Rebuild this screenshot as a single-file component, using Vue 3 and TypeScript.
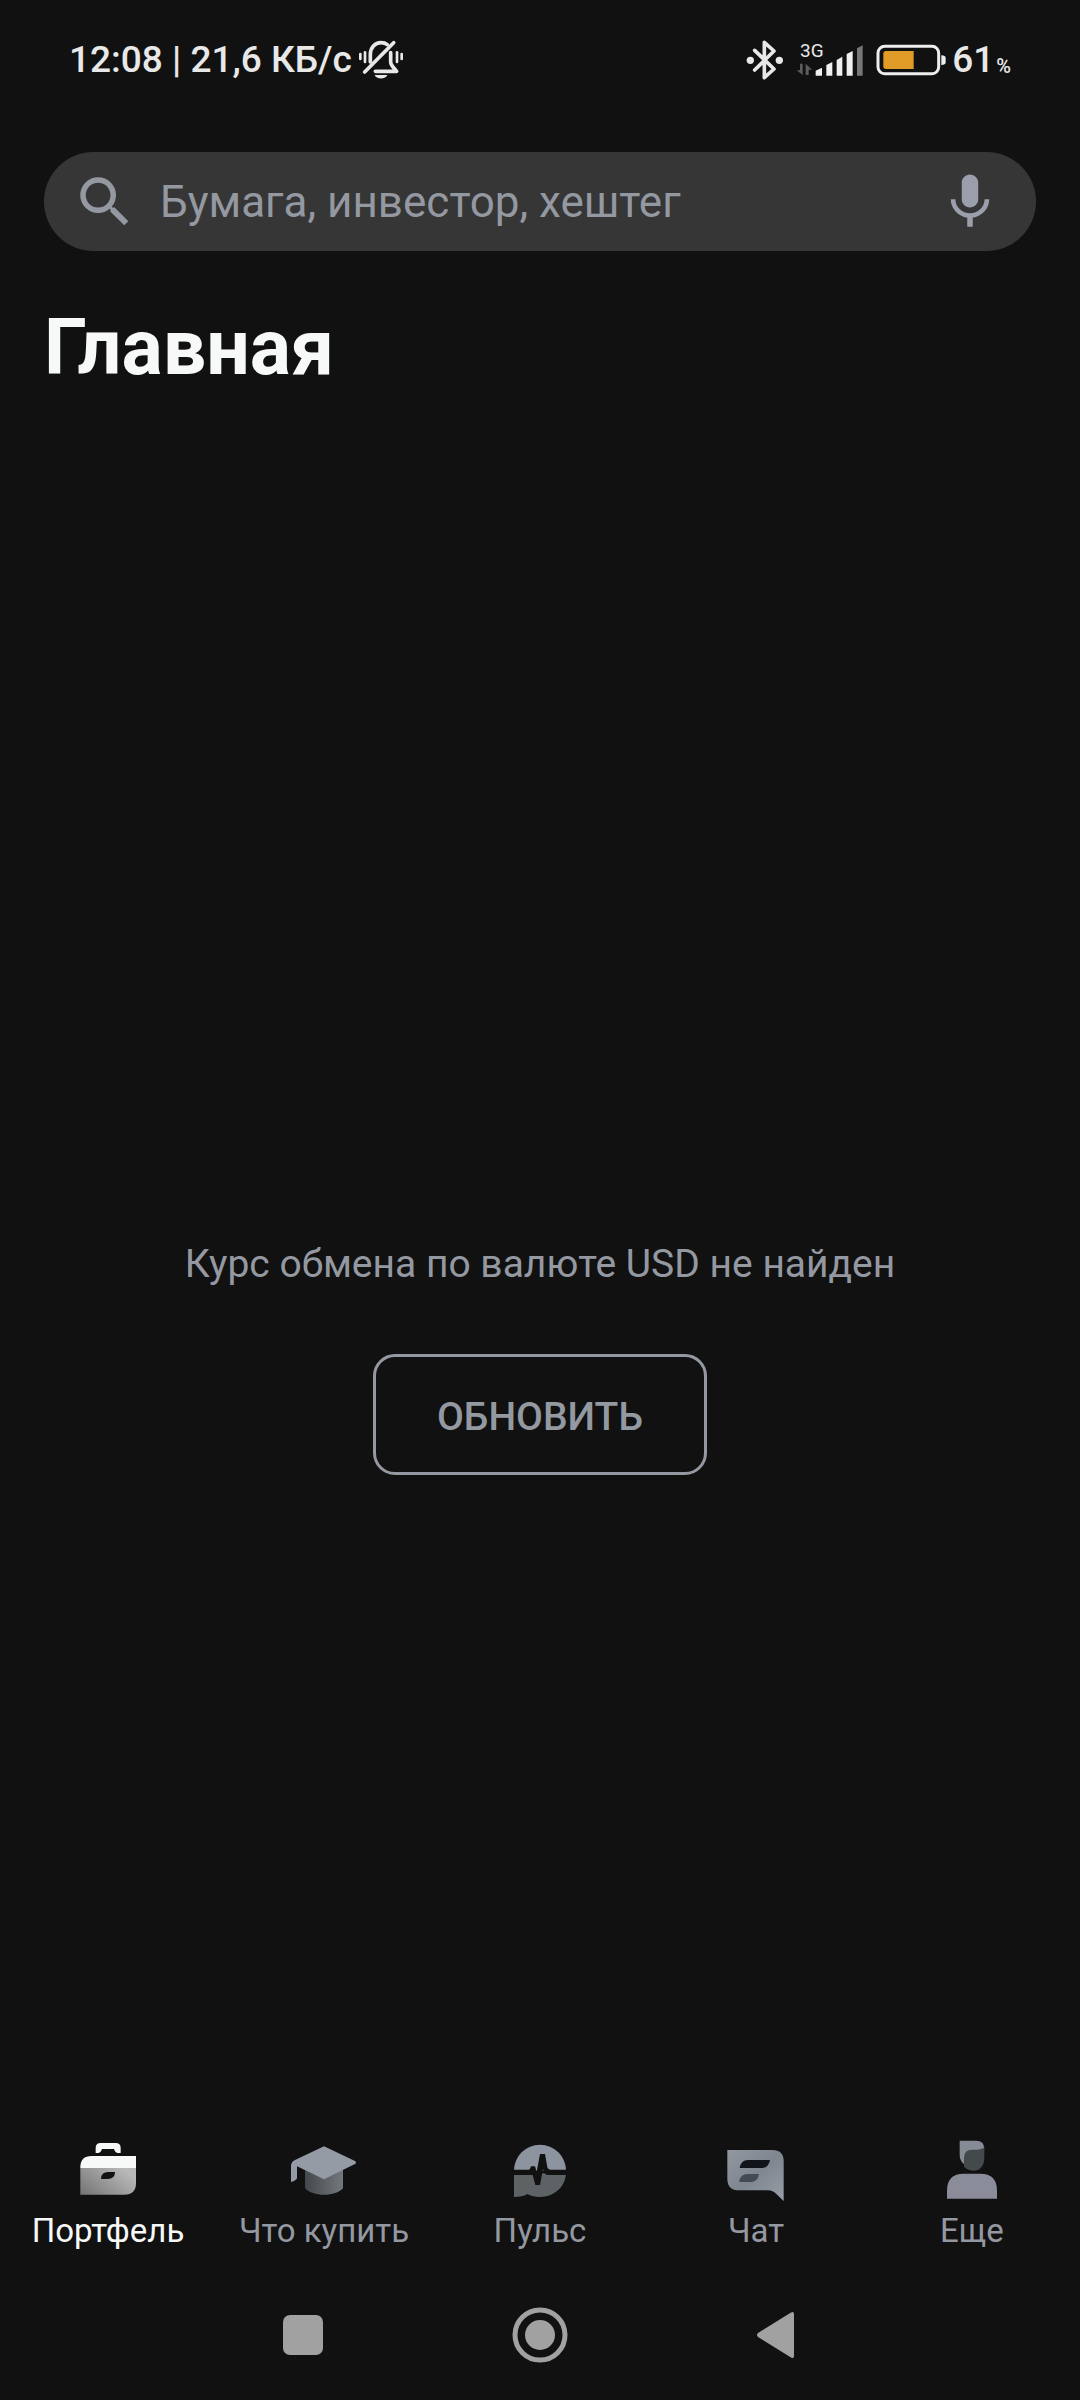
<script setup lang="ts">
import { ref } from 'vue'

type TabId = 'portfolio' | 'buy' | 'pulse' | 'chat' | 'more'

interface Tab {
  id: TabId
  label: string
}

const tabs: Tab[] = [
  { id: 'portfolio', label: 'Портфель' },
  { id: 'buy', label: 'Что купить' },
  { id: 'pulse', label: 'Пульс' },
  { id: 'chat', label: 'Чат' },
  { id: 'more', label: 'Еще' },
]

const active = ref<TabId>('portfolio')
const query = ref('')
</script>

<template>
  <div class="screen">
    <div class="status">
      <div class="status-side">
        <span>12:08 | 21,6 КБ/с</span>
        <svg class="bell" width="46" height="40" viewBox="951 60 138 120" fill="none" stroke="#e8e8e8" stroke-width="11" stroke-linecap="round" stroke-linejoin="round">
          <path d="M958 102v15M972 97v29M1068 97v29M1082 102v15" stroke-width="8" />
          <path d="M988 126v-22c0-22 14-36 32-36 7 0 14 2 19 6M1049 98v28c0 10 7 15 18 28h-64" />
          <path d="M971 156l87-88" />
          <path d="M1001 165h38c-4 14-34 14-38 0z" fill="#e8e8e8" stroke="none" />
        </svg>
      </div>
      <div class="status-side">
        <svg class="bluetooth" width="38" height="40" viewBox="78 57 114 120" fill="none" stroke="#e8e8e8" stroke-width="11" stroke-linecap="round" stroke-linejoin="round">
          <path d="M104 88l58 56-29 26V64l29 26-58 57" />
          <circle cx="91" cy="118" r="11" fill="#e8e8e8" stroke="none" />
          <circle cx="178" cy="118" r="11" fill="#e8e8e8" stroke="none" />
        </svg>
        <svg class="signal" width="68" height="40" viewBox="228 57 204 120">
          <text x="240" y="108" class="network">3G</text>
          <path d="M240 128h8v34l-18-14h10zM257 162v-34l19 18h-10v16z" fill="#5c5c5c" />
          <path d="M287 164v-15l19-9v24zM319 164v-32l18-9v41zM350 164v-47l17-10v57zM380 164V99l18-9v74z" fill="#f0f0f0" />
          <path d="M411 164V82l17-9v91z" fill="#777" />
        </svg>
        <svg class="battery" width="70" height="32" viewBox="469 69 210 96">
          <rect x="475" y="76" width="182" height="82" rx="20" fill="none" stroke="#eee" stroke-width="9" />
          <path d="M499 90h83v54h-83q-8 0-8-8V98q0-8 8-8z" fill="#e09c27" />
          <path d="M665 103q13 0 13 8v13q0 8-13 8z" fill="#eee" />
        </svg>
        <span>61</span><span class="percent">%</span>
      </div>
    </div>

    <label class="search">
      <svg width="66" height="66" viewBox="0 0 24 24" fill="#9498a1" aria-hidden="true">
        <path d="M15.5 14h-.79l-.28-.27A6.47 6.47 0 0 0 16 9.500 6.500 6.500 0 1 0 9.500 16c1.610 0 3.090-.59 4.230-1.570l.27.28v.79l5 4.990L20.490 19l-4.990-5zm-6 0C7.010 14 5 11.990 5 9.500S7.010 5 9.500 5 14 7.010 14 9.500 11.990 14 9.500 14z" />
      </svg>
      <input v-model="query" type="text" placeholder="Бумага, инвестор, хештег" aria-label="Поиск" />
      <button type="button" class="plain" aria-label="Голосовой поиск">
        <svg width="66" height="66" viewBox="0 0 24 24" fill="#9a9fab">
          <path d="M12 14c1.660 0 3-1.340 3-3V5c0-1.660-1.340-3-3-3S9 3.340 9 5v6c0 1.660 1.340 3 3 3zm5.300-3c0 3-2.540 5.100-5.300 5.100S6.700 14 6.700 11H5c0 3.410 2.720 6.230 6 6.720V21h2v-3.280c3.280-.48 6-3.300 6-6.720h-1.700z" />
        </svg>
      </button>
    </label>

    <h1>Главная</h1>

    <main>
      <p>Курс обмена по валюте USD не найден</p>
      <button type="button" class="refresh">ОБНОВИТЬ</button>
    </main>

    <nav class="tabs">
      <button
        v-for="tab in tabs"
        :key="tab.id"
        type="button"
        class="plain tab"
        :class="{ active: tab.id === active }"
        @click="active = tab.id"
      >
        <svg v-if="tab.id === 'portfolio'" width="66" height="66" viewBox="225 48 198 198">
          <defs>
            <linearGradient id="case" x1="0" y1="1" x2="1" y2="0.4">
              <stop offset="0" stop-color="#747474" />
              <stop offset="1" stop-color="#b8b8b8" />
            </linearGradient>
          </defs>
          <path d="M287 99V84q0-15 15-15h45q15 0 15 15v15h-8q-8 0-12-12h-36q-4 12-12 12z" fill="#f7f8f8" />
          <path d="M241 145v-3q0-34 34-34h133v37z" fill="#f7f8f8" />
          <path d="M241 144h167v45q0 35-35 35H241z" fill="url(#case)" />
          <path d="M303 177q0-21 22-21h20q0 21-22 21z" fill="#111" />
        </svg>
        <svg v-else-if="tab.id === 'buy'" width="66" height="66" viewBox="213 48 198 198">
          <defs>
            <linearGradient id="cap" x1="0" y1="0" x2="1" y2="0">
              <stop offset="0" stop-color="#44484b" />
              <stop offset="1" stop-color="#73787d" />
            </linearGradient>
          </defs>
          <path d="M255 145h114v60c-22 26-92 26-114 0z" fill="url(#cap)" />
          <path d="M312 79l93 44q6 4 0 9l-93 46-81-39v36q-2 7-18 11v-49q0-11 12-17z" fill="#949ba5" />
        </svg>
        <svg v-else-if="tab.id === 'pulse'" width="66" height="66" viewBox="201 48 198 198">
          <path d="M222 152a78 78 0 0 1 156 0z" fill="#8c94a0" />
          <path d="M222 160h156c-2 42-36 71-78 71-15 0-28-3-38-9-10 7-23 9-40 9z" fill="#5d6265" />
          <path d="M220 149h46q5-1 7-10h12l5 17 10-54h15l7 40q2 7 9 7h49v16h-55q-13 0-16-18l-9 48h-14l-8-30h-58z" fill="#111" />
        </svg>
        <svg v-else-if="tab.id === 'chat'" width="66" height="66" viewBox="189 48 198 198">
          <defs>
            <linearGradient id="bubble" x1="0" y1="0" x2="1" y2="1">
              <stop offset="0" stop-color="#9298a0" />
              <stop offset="0.5" stop-color="#7f8690" />
              <stop offset="1" stop-color="#999fa9" />
            </linearGradient>
          </defs>
          <path d="M202 90h135q34 0 34 34v119l-22-21q-11-11-24-11h-88q-35 0-35-35z" fill="url(#bubble)" />
          <path d="M239 144q4-24 25-24h66q-4 24-25 24z" fill="#11141a" />
          <path d="M237 186q4-24 25-24h35q-4 24-25 24z" fill="#444b54" />
        </svg>
        <svg v-else width="66" height="66" viewBox="207 48 198 198">
          <path d="M269 62h49q25 0 25 25l-20 8-38 40q-16-12-16-30z" fill="#858c95" />
          <path d="M282 140v-26q0-25 24-25h14q17 0 23-7v30c0 49-42 46-61 28z" fill="#44494c" />
          <path d="M231 236v-23q0-52 50-52h50q50 0 50 52v23z" fill="#8a8d99" />
        </svg>
        <span>{{ tab.label }}</span>
      </button>
    </nav>

    <nav class="system" aria-label="Система">
      <button type="button" class="plain" aria-label="Недавние">
        <svg width="60" height="60" viewBox="0 0 60 60" fill="#a1a1a1"><rect x="10" y="10" width="40" height="40" rx="7" /></svg>
      </button>
      <button type="button" class="plain" aria-label="Домой">
        <svg width="60" height="60" viewBox="0 0 60 60" fill="#a1a1a1">
          <circle cx="30" cy="30" r="25" fill="none" stroke="#a1a1a1" stroke-width="5" />
          <circle cx="30" cy="30" r="15" />
        </svg>
      </button>
      <button type="button" class="plain" aria-label="Назад">
        <svg width="60" height="60" viewBox="0 0 60 60" fill="#a1a1a1"><path d="M11 28L44 7.500q3-1.500 3 1.500v42q0 3-3 1.500L11 32q-2-2 0-4z" /></svg>
      </button>
    </nav>
  </div>
</template>

<style>
body {
  margin: 0;
  background: #111;
}
</style>

<style scoped>
.screen {
  box-sizing: border-box;
  display: flex;
  flex-direction: column;
  min-height: 100vh;
  background: #111;
  color: #9498a1;
  font-family: Roboto, "Noto Sans", sans-serif;
}

svg {
  display: block;
  flex: none;
}

button {
  font-family: inherit;
  cursor: pointer;
}

.plain {
  padding: 0;
  border: 0;
  background: none;
  color: inherit;
}

.status {
  display: flex;
  justify-content: space-between;
  height: 120px;
  padding: 0 69px;
  color: #e8e8e8;
  font-size: 37px;
  font-weight: 500;
  line-height: 120px;
}

.status-side {
  display: flex;
  align-items: center;
}

.bell {
  margin-left: 6px;
}

.signal {
  margin-left: 12px;
}

.battery {
  margin: 0 6px 0 12px;
}

.network {
  fill: #e8e8e8;
  font-size: 57px;
  font-weight: 400;
}

.percent {
  padding: 12px 0 0 2px;
  font-size: 20px;
}

.search {
  display: flex;
  align-items: center;
  height: 99px;
  margin: 32px 44px 0;
  padding: 0 33px 0 28px;
  box-sizing: border-box;
  border-radius: 50px;
  background: #363636;
}

.search input {
  flex: 1;
  min-width: 0;
  height: 66px;
  margin: 0 22px;
  padding: 0;
  border: 0;
  outline: 0;
  background: none;
  color: #fff;
  font: 400 44px Roboto, "Noto Sans", sans-serif;
}

.search input::placeholder {
  color: #9498a1;
  opacity: 1;
}

h1 {
  margin: 49px 44px 0;
  color: #f7f8f8;
  font-size: 77px;
  font-weight: 700;
  line-height: 96px;
}

main {
  display: flex;
  flex: 1;
  flex-direction: column;
  align-items: center;
  justify-content: center;
  padding: 200px 44px 0;
}

main p {
  margin: 0 0 67px;
  font-size: 39px;
  line-height: 46px;
  text-align: center;
}

.refresh {
  height: 121px;
  padding: 4px 61px 0;
  border: 3px solid #9498a1;
  border-radius: 22px;
  background: none;
  color: #9498a1;
  font-size: 39px;
  font-weight: 500;
}

.tabs {
  display: grid;
  grid-template-columns: repeat(5, 1fr);
  height: 150px;
}

.tab {
  display: flex;
  flex-direction: column;
  align-items: center;
  gap: 9px;
  padding-top: 16px;
  font-size: 33px;
  line-height: 40px;
}

.tab.active {
  color: #f7f8f8;
}

.system {
  display: flex;
  align-items: center;
  justify-content: center;
  gap: 177px;
  height: 130px;
}
</style>
